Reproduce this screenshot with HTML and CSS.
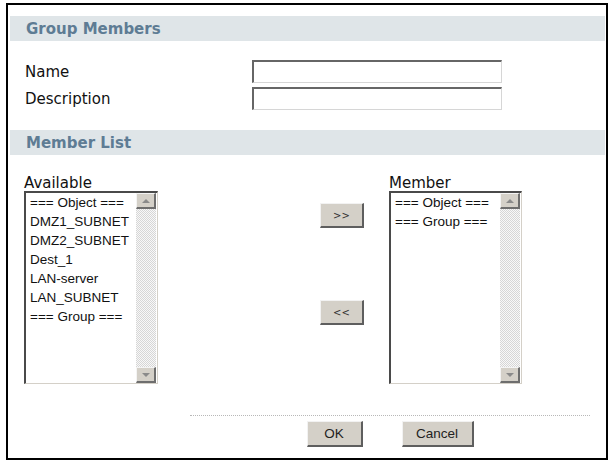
FILE: index.html
```html
<!DOCTYPE html>
<html lang="en">
<head>
    <meta charset="UTF-8">
    <meta name="viewport" content="width=device-width, initial-scale=1.0">
    <title>Group Members</title>
    <link rel="stylesheet" href="styles.css">
</head>
<body>
    <div class="frame">
        <div class="section-title">Group Members</div>
        <div class="form-rows">
            <div class="form-row">
                <label class="field-label">Name</label>
                <input type="text" class="text-field" />
            </div>
            <div class="form-row">
                <label class="field-label">Description</label>
                <input type="text" class="text-field" />
            </div>
        </div>

        <div class="section-title">Member List</div>
        <div class="member-list">
            <div class="list-col">
                <div class="list-label">Available</div>
                <div class="listbox">
                    <div class="list-items">
                        <div>=== Object ===</div>
                        <div>DMZ1_SUBNET</div>
                        <div>DMZ2_SUBNET</div>
                        <div>Dest_1</div>
                        <div>LAN-server</div>
                        <div>LAN_SUBNET</div>
                        <div>=== Group ===</div>
                    </div>
                    <div class="scrollbar">
                        <div class="scroll-btn"><span class="arrow-up"></span></div>
                        <div class="scroll-track"></div>
                        <div class="scroll-btn"><span class="arrow-down"></span></div>
                    </div>
                </div>
            </div>
            <div class="move-col">
                <button class="win-btn move-btn">&gt;&gt;</button>
                <button class="win-btn move-btn">&lt;&lt;</button>
            </div>
            <div class="list-col">
                <div class="list-label">Member</div>
                <div class="listbox member">
                    <div class="list-items">
                        <div>=== Object ===</div>
                        <div>=== Group ===</div>
                    </div>
                    <div class="scrollbar">
                        <div class="scroll-btn"><span class="arrow-up"></span></div>
                        <div class="scroll-track"></div>
                        <div class="scroll-btn"><span class="arrow-down"></span></div>
                    </div>
                </div>
            </div>
        </div>

        <div class="actions">
            <button class="win-btn ok-btn">OK</button>
            <button class="win-btn cancel-btn">Cancel</button>
        </div>
    </div>
</body>
</html>
```

FILE: styles.css
```css
body {
    margin: 0;
    background-color: #ffffff;
    font-family: "DejaVu Sans", Verdana, sans-serif;
    color: #111;
}

.frame {
    margin: 3px 0 0 6px;
    width: 602px;
    height: 457px;
    border: 2px solid #000;
    padding: 11px 1px 0 2px;
    box-sizing: border-box;
}

.section-title {
    background-color: #dfe5e8;
    color: #5e7c94;
    font-weight: bold;
    font-size: 15px;
    height: 25px;
    line-height: 26px;
    padding-left: 16px;
}

.form-rows {
    padding: 19px 0 20px 15px;
    display: flex;
    flex-direction: column;
    gap: 4px;
}

.form-row {
    display: flex;
    align-items: center;
}

.field-label {
    width: 227px;
    font-size: 15px;
}

.text-field {
    width: 250px;
    height: 23px;
    box-sizing: border-box;
    margin: 0;
    padding: 0 3px;
    border-top: 2px solid #666;
    border-left: 2px solid #666;
    border-right: 1px solid #d6d6d6;
    border-bottom: 1px solid #d6d6d6;
    background: #fff;
}

.member-list {
    display: flex;
    padding: 20px 0 0 14px;
}

.list-label {
    font-size: 15px;
    height: 16px;
    line-height: 16px;
}

.listbox {
    display: flex;
    width: 134px;
    height: 193px;
    box-sizing: border-box;
    border-top: 2px solid #4a4a4a;
    border-left: 2px solid #4a4a4a;
    border-right: 1px solid #d4d0c8;
    border-bottom: 1px solid #d4d0c8;
    background: #fff;
}

.listbox.member {
    width: 133px;
}

.list-items {
    flex: 1;
    padding-left: 4px;
    font-family: "Liberation Sans", Arial, sans-serif;
    font-size: 13.5px;
    line-height: 19px;
    white-space: nowrap;
    overflow: hidden;
}

.scrollbar {
    width: 20px;
    margin-right: 1px;
    display: flex;
    flex-direction: column;
}

.scroll-track {
    flex: 1;
    background: repeating-conic-gradient(#d6d6d6 0 25%, #f8f8f8 0 50%) 0 0 / 2px 2px;
}

.scroll-btn {
    height: 16px;
    box-sizing: border-box;
    background-color: #d4d0c8;
    border-top: 1px solid #f4f4f4;
    border-left: 1px solid #f4f4f4;
    border-right: 2px solid #6e6e6e;
    border-bottom: 2px solid #6e6e6e;
    display: flex;
    align-items: center;
    justify-content: center;
}

.arrow-up,
.arrow-down {
    width: 0;
    height: 0;
    border-left: 4px solid transparent;
    border-right: 4px solid transparent;
}

.arrow-up {
    border-bottom: 4px solid #8a8a8a;
}

.arrow-down {
    border-top: 4px solid #8a8a8a;
}

.move-col {
    display: flex;
    flex-direction: column;
    gap: 72px;
    padding-top: 28px;
    margin: 0 25px 0 162px;
}

.win-btn {
    box-sizing: border-box;
    margin: 0;
    padding: 0;
    background-color: #d4d0c8;
    border-top: 1px solid #f2f2f2;
    border-left: 1px solid #f2f2f2;
    border-right: 2px solid #5e5e5e;
    border-bottom: 2px solid #5e5e5e;
    font-family: "Liberation Sans", Arial, sans-serif;
    color: #222;
    cursor: pointer;
}

.move-btn {
    width: 44px;
    height: 25px;
    font-family: "DejaVu Sans", Verdana, sans-serif;
    font-size: 10px;
    color: #333;
}

.actions {
    margin: 31px 0 0 180px;
    width: 400px;
    border-top: 1px dotted #b8b8b8;
    padding-top: 5px;
    display: flex;
    justify-content: center;
    gap: 39px;
}

.ok-btn,
.cancel-btn {
    height: 26px;
    font-size: 13.5px;
}

.ok-btn {
    width: 56px;
}

.cancel-btn {
    width: 72px;
}
```
